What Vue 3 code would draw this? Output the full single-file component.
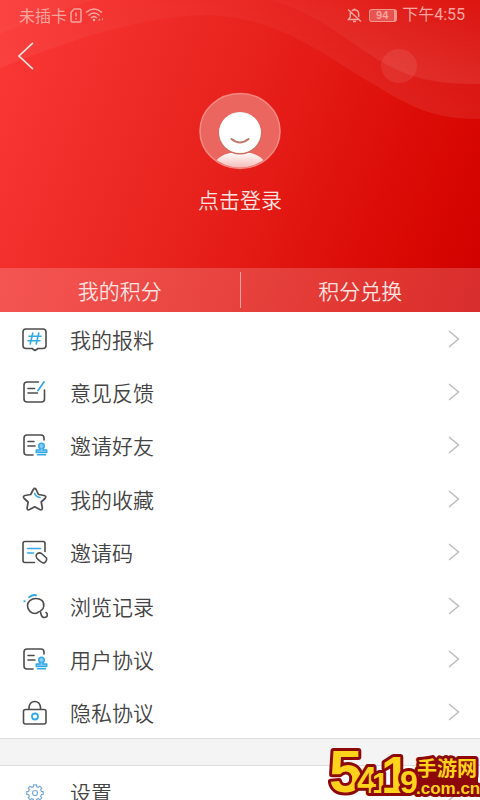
<script setup>
const rows = [
  { text: '我的报料', icon: 'hash' },
  { text: '意见反馈', icon: 'feedback' },
  { text: '邀请好友', icon: 'stamp' },
  { text: '我的收藏', icon: 'star' },
  { text: '邀请码', icon: 'code' },
  { text: '浏览记录', icon: 'history' },
  { text: '用户协议', icon: 'stamp' },
  { text: '隐私协议', icon: 'lock' }
]
</script>

<template>
  <div class="page">
    <header class="hero">
      <svg class="waves" viewBox="0 0 480 312" preserveAspectRatio="none" aria-hidden="true">
        <defs>
          <linearGradient id="band" x1="0" y1="0" x2="0" y2="1">
            <stop offset="0" stop-color="#fff" stop-opacity=".02" />
            <stop offset="1" stop-color="#fff" stop-opacity=".08" />
          </linearGradient>
        </defs>
        <path d="M0 68C65 42 145 14 210 15C285 19 330 60 375 85C415 110 438 119 480 119V0H0Z" fill="url(#band)" />
        <path d="M270 0C320 14 345 40 382 62C414 80 438 84 480 84V0Z" fill="url(#band)" />
        <path d="M0 34C35 20 65 8 95 0H0Z" fill="#fff" opacity=".03" />
        <ellipse cx="399" cy="66" rx="18" ry="17" fill="#fff" opacity=".08" />
      </svg>

      <div class="status">
        <div class="status-group">
          <span>未插卡</span>
          <svg width="12" height="15" viewBox="0 0 12 15" fill="none" stroke="currentColor" stroke-width="1.5" aria-hidden="true">
            <path d="M4.200 1H10Q11 1 11 2V13Q11 14 10 14H2Q1 14 1 13V4.200ZM6 4.500V8.500M6 10V11.500" />
          </svg>
          <svg width="19" height="14" viewBox="0 0 19 14" fill="none" stroke="currentColor" stroke-width="1.6" aria-hidden="true">
            <path d="M1 4.500Q9 -2.500 17 4.500M3.500 7.500Q9 2.500 14.500 7.500M6 10Q9 7.300 12 10" />
            <circle cx="9" cy="12" r="1.300" fill="currentColor" stroke="none" />
            <path d="M13 12.500l1.500-2 1 2zM16.500 10.500l1 2 1-2z" fill="currentColor" stroke="none" />
          </svg>
        </div>
        <div class="status-group">
          <svg width="15" height="15" viewBox="0 0 15 15" fill="none" stroke="currentColor" stroke-width="1.500" aria-hidden="true">
            <path d="M1 1.500L14 13.500M3.300 4.500V9L1.500 11.500H11M4.800 3Q6 1.800 7.500 1.800Q11.500 2 11.700 6V9M7.500 .5V2M6 13.500H9" />
          </svg>
          <span class="battery">94</span>
          <span class="clock">下午4:55</span>
        </div>
      </div>

      <button class="back" type="button" aria-label="返回">
        <svg width="16" height="28" viewBox="0 0 16 28" fill="none" stroke="currentColor" stroke-width="1.600" aria-hidden="true"><path d="M15 .8L1 14L15 27.200" /></svg>
      </button>

      <a class="login" href="#login">
        <svg width="82" height="78" viewBox="0 0 82 78" aria-hidden="true">
          <defs>
            <linearGradient id="body" x1="0" y1="0" x2="0" y2="1">
              <stop offset="0" stop-color="#fff" />
              <stop offset="1" stop-color="#f3b3ae" />
            </linearGradient>
            <clipPath id="disc"><ellipse cx="41" cy="39" rx="39" ry="36.500" /></clipPath>
          </defs>
          <ellipse cx="41" cy="39" rx="40" ry="37.500" fill="#eb665f" stroke="#f48882" stroke-width="1.600" />
          <path clip-path="url(#disc)" d="M16 70Q23 60 41 60Q59 60 66 70V78H16Z" fill="url(#body)" />
          <ellipse cx="41" cy="41.500" rx="21.500" ry="21" fill="#ca7163" />
          <ellipse cx="41" cy="40.500" rx="21" ry="20.500" fill="#fff" />
          <path d="M32.500 47Q41 54 49.500 47" fill="none" stroke="#bd7868" stroke-width="2" stroke-linecap="round" />
        </svg>
        <span>点击登录</span>
      </a>

      <nav class="points">
        <a href="#points">我的积分</a>
        <a href="#exchange">积分兑换</a>
      </nav>
    </header>

    <main>
      <ul class="menu">
        <li v-for="row in rows" :key="row.text">
          <a class="row" href="#">
            <svg class="icon" width="28" height="28" viewBox="0.5 -1 28 28" fill="none" stroke="#4d4d4d" stroke-width="1.600" stroke-linejoin="round" stroke-linecap="round" aria-hidden="true">
              <template v-if="row.icon === 'hash'">
                <path d="M5.500 3H22.500Q25.500 3 25.500 6V19.500Q25.500 22.500 22.500 22.500H17.500L14.500 24.500L11.500 22.500H5.500Q2.500 22.500 2.500 19.500V6Q2.500 3 5.500 3Z" />
                <path class="blue" d="M12.300 7L9.700 18M18.300 7L15.700 18M8.500 10.300H20.500M7.500 14.700H19.500" />
              </template>
              <template v-else-if="row.icon === 'feedback'">
                <path d="M18 3H6.500Q3.500 3 3.500 6V20Q3.500 23 6.500 23H21Q24 23 24 20V11M7.500 9.500H14M7.500 14H17" />
                <path class="blue" d="M17.500 11.500L23.500 3" stroke-width="1.800" />
              </template>
              <template v-else-if="row.icon === 'stamp'">
                <path d="M23.500 8V6Q23.500 3 20.500 3H6.500Q3.500 3 3.500 6V20Q3.500 23 6.500 23H12.500M7.500 9.500H13.500M7.500 14H14.500" />
                <circle class="blue stamp" cx="21" cy="14" r="2.700" />
                <path class="blue stamp" d="M19.500 16.500V18H15.800V20.500H26.200V18H22.500V16.500M17 22.700H25" />
              </template>
              <template v-else-if="row.icon === 'star'">
                <path stroke-width="1.700" d="M12.800 3.500Q14.200 1.300 15.600 3.500L18 8.500L23.700 9.500Q26.500 10.200 24.500 12.500L20.700 16L21.800 21.500Q22 24.600 19.300 23.500L14.200 20.800L9.100 23.500Q6.200 24.600 6.700 21.500L7.600 16L3.700 12.500Q1.800 10.200 4.500 9.500L10.200 8.500Z" />
                <path class="blue" d="M14.200 7.500Q15.500 11 19.500 11.500" />
              </template>
              <template v-else-if="row.icon === 'code'">
                <path d="M24.500 12.500V4.500Q24.500 2.500 22.500 2.500H4.500Q2.500 2.500 2.500 4.500V21.500Q2.500 23.500 4.500 23.500H14" />
                <path class="blue" d="M7 9.500H20M7 14H13" />
                <path d="M16 15.500Q18 12.800 21 14.500L26 19Q26.800 22 23.500 24Q21 24 16.500 19.500Q14.800 17.500 16 15.500Z" />
              </template>
              <template v-else-if="row.icon === 'history'">
                <path d="M23.200 13.500C24 8 20 5.500 15.500 5.500C10.500 5.500 7 9 7 12.500C7 17.500 11 20.500 14.500 20.500C18.500 20.500 17.500 18 19.500 18.500C21 19 19.500 24.500 24 24.500C27.500 24.500 27.500 20.500 25.500 19.500M23.200 13.500Q23 16 20.500 17.500" />
                <path class="blue" stroke-width="1.900" d="M8.500 4.200Q12 1.500 15.500 2.200M3.800 8.200H4.200" />
              </template>
              <template v-else>
                <path d="M5 10.500H23.500Q25.500 10.500 25.500 12.500V23Q25.500 25 23.500 25H5Q3 25 3 23V12.500Q3 10.500 5 10.500ZM8.500 10.500V8Q9.500 2.500 14.300 2.500Q19.100 2.500 20 8V10.500" />
                <circle class="blue" cx="14.500" cy="17.500" r="3" stroke-width="1.800" />
              </template>
            </svg>
            <span>{{ row.text }}</span>
            <svg class="chevron" width="12" height="20" viewBox="0 0 12 20" aria-hidden="true"><path d="M1 2L10.500 10L1 18" /></svg>
          </a>
        </li>
      </ul>

      <ul class="menu settings">
        <li>
          <a class="row" href="#settings">
            <svg class="icon" width="28" height="28" viewBox="0.5 -1 28 28" fill="none" stroke="#7cabd4" stroke-width="1.200" stroke-linejoin="round" aria-hidden="true">
              <path d="M12.900 7.600L13 5.800H16L16.100 7.600L17.900 8.400L19.300 7.200L21.300 9.200L20.100 10.600L20.900 12.400L22.700 12.500V15.500L20.900 15.600L20.100 17.400L21.300 18.800L19.300 20.800L17.900 19.600L16.100 20.400L16 22.200H13L12.900 20.400L11.100 19.600L9.700 20.800L7.700 18.800L8.900 17.400L8.100 15.600L6.300 15.500V12.500L8.100 12.400L8.900 10.600L7.700 9.200L9.700 7.200L11.100 8.400Z" />
              <circle cx="14.500" cy="14" r="2.500" />
            </svg>
            <span>设置</span>
            <svg class="chevron" width="12" height="20" viewBox="0 0 12 20" aria-hidden="true"><path d="M1 2L10.500 10L1 18" /></svg>
          </a>
        </li>
      </ul>
    </main>

    <svg class="brand" width="152" height="56" viewBox="0 0 152 56" role="img" aria-label="5419手游网">
      <path class="plate" d="M91 20L107 14L150 17V51H91Z" />
      <g class="brand-text">
        <text x="1" y="48" font-size="60">5</text>
        <text x="29" y="49" font-size="36">4</text>
        <text x="44" y="49" font-size="30">1</text>
        <text x="53" y="49" font-size="52">1</text>
        <text x="72" y="49" font-size="32">9</text>
        <text class="cn" x="89" y="32" font-size="20">手游网</text>
        <text class="domain" x="88" y="50" font-size="17">.com.cn</text>
      </g>
    </svg>
  </div>
</template>

<style>
body {
  background: #fff;
}
</style>

<style scoped>
.page {
  position: relative;
  height: 100vh;
  overflow: hidden;
  background: #fff;
  color: #444;
  font-family: "Noto Sans CJK SC", sans-serif;
  font-size: 21px;
  font-weight: 350;
}
a {
  color: inherit;
  text-decoration: none;
}
.hero {
  position: relative;
  display: flex;
  flex-direction: column;
  color: #ffe3e0;
  background: linear-gradient(112deg, #fb3937 0%, #e9241f 42%, #d90803 84%, #cf0000 100%);
}
.waves {
  position: absolute;
  inset: 0;
  width: 100%;
  height: 100%;
}
.status,
.back,
.login,
.points {
  position: relative;
}
.status {
  display: flex;
  justify-content: space-between;
  padding: 3px 15px 5px 19px;
  color: #f9a5a0;
  font-size: 16px;
  font-weight: 400;
  line-height: 24px;
}
.status-group {
  display: flex;
  align-items: center;
  gap: 3px;
}
.status-group .battery {
  margin: 0 2px 0 4px;
  width: 28px;
  border: 1px solid #f09690;
  border-right-width: 3px;
  border-radius: 3px;
  box-sizing: border-box;
  background: #ffffff38;
  font: bold 11px/11px "Liberation Sans", sans-serif;
  text-align: center;
}
.clock {
  font-family: Roboto, "Noto Sans CJK SC", sans-serif;
}
.back {
  align-self: flex-start;
  display: flex;
  margin: 10px 0 0 18px;
  padding: 0;
  border: 0;
  background: none;
  color: inherit;
}
.login {
  align-self: center;
  display: flex;
  flex-direction: column;
  align-items: center;
  gap: 13px;
  margin: 22px 0 53px;
  line-height: 32px;
}
.points {
  display: flex;
  padding: 4px 0;
  background: #ffffff2e;
  line-height: 36px;
  text-align: center;
}
.points a {
  flex: 1;
}
.points a:first-child {
  border-right: 1px solid #f6a5a2;
}
.menu {
  display: grid;
  grid-auto-rows: 1fr;
  min-height: 427px;
  margin: 0;
  padding: 0;
  list-style: none;
}
.row {
  display: flex;
  align-items: center;
  height: 100%;
  padding: 0 20px 0 21px;
}
.row span {
  flex: 1;
  margin-left: 21px;
  line-height: 32px;
}
.icon .blue {
  stroke: #35a9e6;
}
.icon .stamp {
  fill: #8dcdf5;
}
.chevron {
  fill: none;
  stroke: #bdbdbd;
  stroke-width: 1.5;
}
.settings {
  min-height: 54px;
  border-top: 26px solid #f4f4f4;
  box-shadow: inset 0 1px #ddd, 0 -1px #ddd;
}
.brand {
  position: absolute;
  right: 0;
  bottom: 0;
}
.plate {
  fill: #8d0808;
}
.brand-text {
  fill: #ffd21c;
  stroke: #8d0808;
  stroke-width: 6;
  stroke-linejoin: round;
  paint-order: stroke;
  font-family: "Liberation Sans Narrow", "Liberation Sans", sans-serif;
  font-weight: 700;
}
.brand-text .cn {
  font-family: "Noto Sans CJK SC", sans-serif;
}
.brand-text .domain {
  font-family: "Liberation Sans", sans-serif;
}
</style>
